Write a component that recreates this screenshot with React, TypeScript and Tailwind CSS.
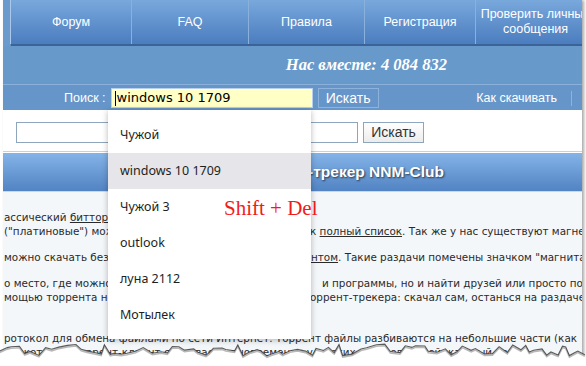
import React from "react";

const navItems: { label: React.ReactNode; w: number }[] = [
  { label: "Форум", w: 121 },
  { label: "FAQ", w: 117 },
  { label: "Правила", w: 116 },
  { label: "Регистрация", w: 111 },
  {
    label: (
      <>
        Проверить личные
        <br />
        сообщения
      </>
    ),
    w: 120,
  },
];

const suggestions = ["Чужой", "windows 10 1709", "Чужой 3", "outlook", "луна 2112", "Мотылек"];

const jagPoints = (() => {
  let s = 11;
  const rnd = () => {
    s = (s * 9301 + 49297) % 233280;
    return s / 233280;
  };
  const pts: [number, number][] = [];
  let x = -2;
  while (x <= 590) {
    const y = 4 + rnd() * 12;
    pts.push([x, y]);
    x += 3 + rnd() * 7;
  }
  return pts;
})();

function TornEdge() {
  const line = jagPoints.map(([x, y]) => `${x.toFixed(1)},${y.toFixed(1)}`).join(" ");
  const shadow = jagPoints.map(([x, y]) => `${x.toFixed(1)},${(y + 1.5).toFixed(1)}`).join(" ");
  const poly = `${line} 590,30 -2,30`;
  return (
    <svg className="absolute left-0 top-[340px]" width="586" height="26" viewBox="0 0 586 26">
      <polygon points={poly} fill="#ffffff" />
      <polyline points={shadow} fill="none" stroke="#9a9a9a" strokeWidth="1.6" opacity="0.7" />
      <polyline points={line} fill="none" stroke="#333" strokeWidth="1.1" opacity="0.8" />
    </svg>
  );
}

const Line = ({
  left,
  right,
  rightX,
  className = "",
}: {
  left: React.ReactNode;
  right?: React.ReactNode;
  rightX?: number;
  className?: string;
}) => (
  <div className={`relative h-[14px] whitespace-nowrap ${className}`}>
    <span className="absolute left-[1px] top-0">{left}</span>
    {right && (
      <span className="absolute top-0" style={{ left: (rightX ?? 308) - 3 }}>
        {right}
      </span>
    )}
  </div>
);

export default function App() {
  return (
    <div
      className="relative w-[586px] h-[366px] overflow-hidden bg-white"
      style={{ fontFamily: '"Liberation Sans", Arial, sans-serif' }}
    >
      <div className="ml-[3px] w-[579px] h-[366px] overflow-hidden flex flex-col shadow-[2px_0_3px_rgba(0,0,0,0.35)]">
        {/* nav */}
        <div className="h-[46px] shrink-0 bg-[#6a9bcc] pl-[7px]">
          <div className="flex h-[44px] bg-gradient-to-b from-[#79a8dc] to-[#4b7dbf] border-l border-[#a9c8ec] shadow-[1px_2px_1px_rgba(40,75,130,0.7)]">
            {navItems.map((n, i) => (
              <div
                key={i}
                className="shrink-0 flex items-center justify-center text-center text-white text-[12.5px] leading-[15px] border-r border-[#8ab0dc]"
                style={{ width: n.w }}
              >
                <span>{n.label}</span>
              </div>
            ))}
          </div>
        </div>

        {/* band */}
        <div className="h-[38px] shrink-0 bg-[#6899cb] flex items-center justify-end pr-[135px]">
          <span
            className="text-white font-bold italic text-[16.5px]"
            style={{ fontFamily: '"Liberation Serif", Georgia, serif' }}
          >
            Нас вместе: 4 084 832
          </span>
        </div>

        {/* search row */}
        <div className="h-[26px] shrink-0 border-t border-[#8bb0d9] bg-[#6696c9] flex items-start pt-[3px] pl-[61px] pr-[10px]">
          <span className="text-white text-[12.5px] leading-[20px]">Поиск :</span>
          <div
            className="ml-[5px] w-[202px] h-[20px] bg-[#ffffc6] border border-[#b9d0ea] flex items-center pl-[3px] text-black text-[13px]"
            style={{ fontFamily: '"DejaVu Sans", Verdana, sans-serif' }}
          >
            <span className="w-px h-[15px] bg-black mr-[1px]" />
            windows 10 1709
          </div>
          <div className="ml-[5px] w-[61px] h-[20px] border border-[#8db2db] flex items-center justify-center text-white text-[14px]">
            Искать
          </div>
          <span className="ml-auto text-white text-[12.5px] leading-[20px]">Как скачивать</span>
          <span className="ml-[14px] mt-[3px] w-px h-[15px] bg-[#8fb3da]" />
        </div>

        {/* white search area */}
        <div className="h-[41px] shrink-0 bg-white flex items-center pl-[13px] pt-[4px]">
          <div className="w-[342px] h-[21px] border border-[#8ea6bd] bg-white" />
          <div className="ml-[5px] w-[61px] h-[21px] border border-[#8ea6bd] bg-gradient-to-b from-white to-[#ececec] flex items-center justify-center text-[#333] text-[14px]">
            Искать
          </div>
        </div>
        <div className="h-[2px] shrink-0 border-t border-[#c3d2e2] bg-white" />

        {/* header */}
        <div className="h-[38px] shrink-0 bg-gradient-to-b from-[#84b4e7] to-[#5283c3] flex items-center justify-end pr-[138px]">
          <span className="text-white font-bold text-[15.5px] [text-shadow:1px_1px_2px_rgba(0,0,0,0.65)]">
            Торрент-трекер NNM-Club
          </span>
        </div>
        <div className="h-px shrink-0 bg-[#c8d8ea]" />

        {/* content */}
        <div
          className="flex-1 bg-[#f4f7fa] pt-[18px] text-[#2a2a2a] text-[10.4px] leading-[14px]"
          style={{ fontFamily: '"DejaVu Sans", Verdana, sans-serif' }}
        >
          <Line
            left={
              <>
                ассический <span className="underline">битторрент</span> трекер
              </>
            }
          />
          <Line
            left={<>("платиновые") может</>}
            right={
              <>
                к <span className="underline">полный список</span>. Так же у нас существуют магнет
              </>
            }
            rightX={310}
          />
          <Line
            className="mt-[12px]"
            left={<>можно скачать без регистрации</>}
            right={
              <>
                <span className="underline">нтом</span>. Такие раздачи помечены значком "магнита"
              </>
            }
            rightX={311}
          />
          <Line
            className="mt-[12px]"
            left={<>о место, где можно скачать</>}
            right={<>и программы, но и найти друзей или просто пообщаться</>}
            rightX={322}
          />
          <Line
            left={<>мощью торрента невозможно</>}
            right={<>оррент-трекера: скачал сам, останься на раздаче</>}
            rightX={310}
          />
          <div className="mt-[27px] h-[14px] whitespace-nowrap pl-[1px]">
            ротокол для обмена файлами по сети Интернет. Торрент файлы разбиваются на небольшие части (как
          </div>
          <div className="h-[14px] whitespace-nowrap pl-[1px]">
            ки, которые торрент-клиент скачивает одновременно у многих пользователей, каждый из
          </div>
        </div>
      </div>

      {/* dropdown */}
      <div
        className="absolute left-[108px] top-[110px] w-[203px] h-[229px] bg-white pt-[7px] shadow-[0_1px_6px_rgba(0,0,0,0.28)]"
        style={{ fontFamily: '"Noto Sans", "Open Sans", sans-serif' }}
      >
        {suggestions.map((s, i) => (
          <div
            key={s}
            className={`h-[36px] flex items-center pl-[12px] text-[12.5px] text-[#1e1e1e] ${
              i === 1 ? "bg-[#e6e6ea]" : ""
            }`}
          >
            {s}
          </div>
        ))}
      </div>

      {/* annotation */}
      <div
        className="absolute left-[224px] top-[196px] text-[21px] leading-[24px] text-[#f21b1b]"
        style={{ fontFamily: '"Liberation Serif", "Times New Roman", serif' }}
      >
        Shift + Del
      </div>

      <TornEdge />
    </div>
  );
}
